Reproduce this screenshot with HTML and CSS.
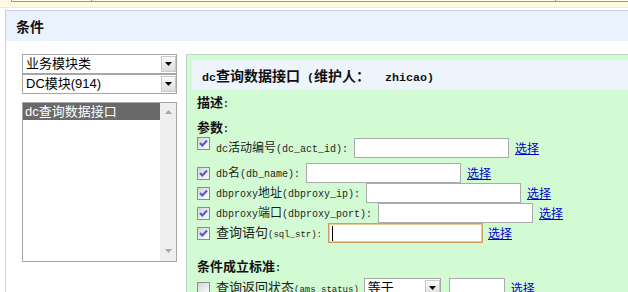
FILE: index.html
```html
<!DOCTYPE html>
<html lang="zh-CN">
<head>
<meta charset="utf-8">
<title>条件</title>
<link rel="stylesheet" href="styles.css">
</head>
<body>
<div class="topbar">
  <div class="tbl"><div class="c1"></div><div class="c2"></div><div class="c3"></div></div>
</div>
<div class="panel">
  <div class="panel-head">条件</div>
  <div class="panel-body">
    <div class="left">
      <div class="sel">
        <span class="sel-text">业务模块类</span>
        <span class="sel-btn"><svg width="7" height="4" viewBox="0 0 7 4"><polygon points="0,0 7,0 3.5,4" fill="#000"/></svg></span>
      </div>
      <div class="sel">
        <span class="sel-text">DC模块(914)</span>
        <span class="sel-btn"><svg width="7" height="4" viewBox="0 0 7 4"><polygon points="0,0 7,0 3.5,4" fill="#000"/></svg></span>
      </div>
      <div class="listbox">
        <div class="list-items">
          <div class="item selected">dc查询数据接口</div>
        </div>
        <div class="vscroll">
          <svg width="7" height="4" viewBox="0 0 7 4"><polygon points="0,4 7,4 3.5,0" fill="#a8a8a8"/></svg>
          <svg width="7" height="4" viewBox="0 0 7 4"><polygon points="0,0 7,0 3.5,4" fill="#a8a8a8"/></svg>
        </div>
      </div>
    </div>

    <div class="detail">
      <div class="detail-title"><span class="m">dc</span>查询数据接口<span class="m"> (</span>维护人：<span class="m who">zhicao)</span></div>
      <div class="detail-body">
        <div class="sec sec-desc">描述<span class="m">:</span></div>
        <div class="sec sec-param">参数<span class="m">:</span></div>

        <div class="row row-first">
          <span class="cb cb-up"><svg width="11" height="11" viewBox="0 0 11 11"><path d="M2 5 L4.3 7.5 L9 2.5" fill="none" stroke="#4d5cc6" stroke-width="2"/></svg></span>
          <span class="lbl"><span class="m">dc</span>活动编号<span class="m">(dc_act_id):</span></span>
          <input class="inp" type="text">
          <a class="lnk" href="#">选择</a>
        </div>
        <div class="row row-next">
          <span class="cb"><svg width="11" height="11" viewBox="0 0 11 11"><path d="M2 5 L4.3 7.5 L9 2.5" fill="none" stroke="#4d5cc6" stroke-width="2"/></svg></span>
          <span class="lbl"><span class="m">db</span>名<span class="m">(db_name):</span></span>
          <input class="inp" type="text">
          <a class="lnk" href="#">选择</a>
        </div>
        <div class="row">
          <span class="cb"><svg width="11" height="11" viewBox="0 0 11 11"><path d="M2 5 L4.3 7.5 L9 2.5" fill="none" stroke="#4d5cc6" stroke-width="2"/></svg></span>
          <span class="lbl"><span class="m">dbproxy</span>地址<span class="m">(dbproxy_ip):</span></span>
          <input class="inp" type="text">
          <a class="lnk" href="#">选择</a>
        </div>
        <div class="row">
          <span class="cb"><svg width="11" height="11" viewBox="0 0 11 11"><path d="M2 5 L4.3 7.5 L9 2.5" fill="none" stroke="#4d5cc6" stroke-width="2"/></svg></span>
          <span class="lbl"><span class="m">dbproxy</span>端口<span class="m">(dbproxy_port):</span></span>
          <input class="inp" type="text">
          <a class="lnk" href="#">选择</a>
        </div>
        <div class="row">
          <span class="cb"><svg width="11" height="11" viewBox="0 0 11 11"><path d="M2 5 L4.3 7.5 L9 2.5" fill="none" stroke="#4d5cc6" stroke-width="2"/></svg></span>
          <span class="lbl lbl-big">查询语句<span class="m">(sql_str):</span></span>
          <span class="focus-wrap"><input class="inp inp-focus" type="text"><span class="caret"></span></span>
          <a class="lnk lnk-tight" href="#">选择</a>
        </div>

        <div class="sec sec-cond">条件成立标准<span class="m">:</span></div>

        <div class="row row-cond">
          <span class="cb"></span>
          <span class="lbl lbl-big">查询返回状态<span class="m">(ams_status)</span></span>
          <div class="sel sel-cmp">
            <span class="sel-text">等于</span>
            <span class="sel-btn"><svg width="7" height="4" viewBox="0 0 7 4"><polygon points="0,0 7,0 3.5,4" fill="#000"/></svg></span>
          </div>
          <input class="inp inp-small" type="text">
          <a class="lnk" href="#">选择</a>
        </div>
      </div>
    </div>
  </div>
</div>
</body>
</html>
```

FILE: styles.css
```css
* { box-sizing: border-box; }

html, body {
  margin: 0;
  padding: 0;
  background: #fff;
}

body {
  width: 628px;
  height: 292px;
  overflow: hidden;
  font-family: "Noto Sans CJK SC", "Liberation Sans", sans-serif;
  font-size: 12px;
  color: #1e1e1e;
}

/* top strip */
.topbar {
  height: 8px;
  background: #fffae4;
  border-bottom: 1px solid #f1eacb;
}
.tbl {
  display: flex;
  height: 2px;
  margin-left: 11px;
  border-left: 1px solid #8e9b94;
  border-bottom: 1px solid #8e9b94;
}
.c1 { width: 80px; border-right: 1px solid #8e9b94; }
.c2 { width: 464px; border-right: 1px solid #8e9b94; }
.c3 { flex: 1; }

/* outer panel */
.panel {
  margin: 2px 0 0 5px;
  border-top: 1px solid #cfcce6;
  border-left: 1px solid #cfcce6;
}
.panel-head {
  height: 30px;
  line-height: 30px;
  padding-left: 10px;
  background: #eaf2fd;
  font-size: 14px;
  font-weight: bold;
  color: #111;
}
.panel-body {
  display: flex;
  align-items: flex-start;
  padding: 13px 0 0 16px;
}

/* left column */
.left {
  width: 155px;
  flex: none;
}
.sel {
  display: flex;
  height: 20px;
  border: 1px solid #a6a6a6;
  background: #fff;
  font-family: "Liberation Sans", "Noto Sans CJK SC", sans-serif;
  font-size: 13px;
  line-height: 18px;
  color: #000;
}
.sel + .sel { margin-top: 0; }
.sel-text {
  flex: 1;
  padding-left: 3px;
  white-space: nowrap;
  overflow: hidden;
}
.sel-btn {
  flex: none;
  width: 15px;
  margin: 1px 0 1px 0;
  border: 1px solid #c8c8c8;
  background: linear-gradient(#fbfbfb, #dcdcdc);
  display: flex;
  align-items: center;
  justify-content: center;
}

.listbox {
  display: flex;
  height: 160px;
  margin-top: 8px;
  border: 1px solid #a6a6a6;
  background: #fff;
}
.list-items { flex: 1; }
.item {
  height: 17px;
  line-height: 17px;
  padding-left: 2px;
  font-family: "Liberation Sans", "Noto Sans CJK SC", sans-serif;
  font-size: 13px;
  color: #000;
}
.item.selected {
  background: #6a6a6a;
  color: #fff;
}
.vscroll {
  width: 16px;
  flex: none;
  background: #eeeeee;
  display: flex;
  flex-direction: column;
  align-items: center;
  justify-content: space-between;
  padding: 7px 0 8px;
}

/* detail panel */
.detail {
  flex: 1;
  height: 260px;
  margin-left: 9px;
  padding-top: 5px;
  background: #d3fbd3;
  border-top: 1px solid #b7dcc4;
  border-left: 1px solid #bad6c2;
}
.detail-title {
  height: 30px;
  line-height: 30px;
  margin-left: 5px;
  padding-left: 10px;
  background: #eef4fc;
  font-size: 14px;
  font-weight: bold;
  color: #111;
  white-space: nowrap;
}
.detail-title .m { font-size: 11.67px; }
.detail-title .who { margin-left: 15px; }

.m {
  font-family: "Liberation Mono", monospace;
  font-size: 10px;
}

.detail-body { padding-left: 10px; }

.sec {
  height: 16px;
  line-height: 16px;
  font-size: 13px;
  font-weight: bold;
  color: #111;
}
.sec-desc { margin-top: 4px; }
.sec-param { margin-top: 9px; }
.sec-cond { margin-top: 15px; }

.row {
  display: flex;
  align-items: center;
  height: 20px;
  white-space: nowrap;
}
.row-first { margin-top: 3px; }
.row-next { margin-top: 5px; }
.row-cond { margin-top: 4px; }

.cb {
  flex: none;
  width: 13px;
  height: 13px;
  margin-right: 6px;
  border: 1px solid #8c8c8c;
  background: linear-gradient(135deg, #d4d4d4, #fdfdfd);
  display: flex;
  align-items: center;
  justify-content: center;
}
.cb-up {
  align-self: flex-start;
  margin-top: -1px;
}

.lbl {
  font-size: 12px;
  line-height: 20px;
  color: #1e1e1e;
}
.lbl-big { font-size: 13px; }
.lbl-big .m { font-size: 9px; }

.inp {
  width: 155px;
  height: 20px;
  margin: 0 0 0 6px;
  padding: 0 2px;
  border: 1px solid #ababab;
  background: #fff;
  font-size: 12px;
  outline: none;
}
.focus-wrap {
  position: relative;
  display: flex;
}
.inp-focus {
  border: 1px solid #c9a05e;
  box-shadow: inset 0 0 0 1px #e7cc98;
}
.caret {
  position: absolute;
  left: 10px;
  top: 3px;
  width: 1px;
  height: 15px;
  background: #000;
}

.lnk {
  margin-left: 6px;
  font-size: 12px;
  line-height: 20px;
  color: #0000cc;
  text-decoration: underline;
}
.lnk-tight { margin-left: 5px; }

.sel-cmp {
  width: 77px;
  margin-left: 5px;
}
.inp-small {
  width: 56px;
  margin-left: 8px;
}
```
